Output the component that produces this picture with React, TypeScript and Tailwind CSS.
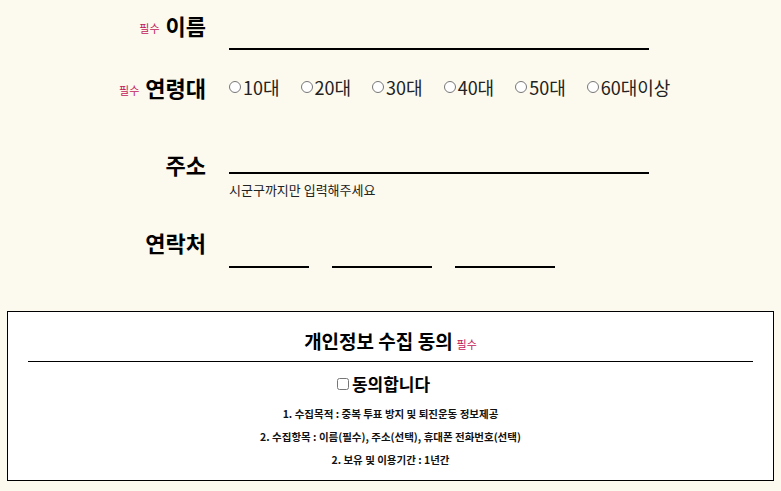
import React from "react";

const ages = ["10대", "20대", "30대", "40대", "50대", "60대이상"];

function Required({ className = "" }: { className?: string }) {
  return <span className={`text-[11px] font-normal text-[#c2185b] ${className}`}>필수</span>;
}

export default function App() {
  return (
    <div
      className="min-h-screen bg-[#fcf9ee] text-black overflow-hidden"
      style={{ fontFamily: '"Noto Sans CJK KR", "Noto Sans", sans-serif' }}
    >
      {/* 이름 */}
      <div className="flex h-[60px]">
        <div className="w-[206px] mt-[10px] h-[30px] flex items-center justify-end gap-[6px]">
          <Required className="mt-[6px]" />
          <span className="text-[22px] font-bold leading-[30px]">이름</span>
        </div>
        <input className="ml-[23px] mt-[10px] h-[40px] w-[420px] border-b-2 border-black bg-transparent outline-none" />
      </div>

      {/* 연령대 */}
      <div className="flex h-[60px]">
        <div className="w-[206px] mt-[12px] h-[30px] flex items-center justify-end gap-[6px]">
          <Required className="mt-[6px]" />
          <span className="text-[22px] font-bold leading-[30px]">연령대</span>
        </div>
        <div className="ml-[23px] mt-[12px] h-[30px] flex items-center gap-[21px]">
          {ages.map((a) => (
            <label key={a} className="flex items-center gap-[2px] text-[18px] text-[#222]">
              <input type="radio" name="age" className="m-0 w-[12px] h-[12px]" />
              {a}
            </label>
          ))}
        </div>
      </div>

      {/* 주소 */}
      <div className="flex h-[90px]">
        <div className="w-[206px] mt-[29px] h-[30px] flex items-center justify-end">
          <span className="text-[22px] font-bold leading-[30px]">주소</span>
        </div>
        <div className="ml-[23px] mt-[14px] flex flex-col">
          <input className="h-[40px] w-[420px] border-b-2 border-black bg-transparent outline-none" />
          <span className="mt-[7px] text-[13px] leading-[18px] text-[#222]">시군구까지만 입력해주세요</span>
        </div>
      </div>

      {/* 연락처 */}
      <div className="flex h-[80px]">
        <div className="w-[206px] mt-[17px] h-[30px] flex items-center justify-end">
          <span className="text-[22px] font-bold leading-[30px]">연락처</span>
        </div>
        <div className="ml-[23px] mt-[18px] flex gap-[23px]">
          <input className="h-[40px] w-[80px] border-b-2 border-black bg-transparent outline-none" />
          <input className="h-[40px] w-[100px] border-b-2 border-black bg-transparent outline-none" />
          <input className="h-[40px] w-[100px] border-b-2 border-black bg-transparent outline-none" />
        </div>
      </div>

      {/* 개인정보 수집 동의 */}
      <div className="mx-[7px] mt-[21px] h-[170px] border border-black bg-white px-[20px] pt-[15px]">
        <div className="flex items-baseline justify-center gap-[4px] h-[27px]">
          <span className="text-[19px] font-bold leading-[27px]">개인정보 수집 동의</span>
          <Required />
        </div>
        <div className="mt-[7px] h-px bg-black" />
        <label className="mt-[10px] h-[24px] flex items-center justify-center gap-[3px] pr-[14px]">
          <input type="checkbox" className="m-0 w-[12px] h-[12px]" />
          <span className="text-[17px] font-bold leading-[24px]">동의합니다</span>
        </label>
        <div className="mt-[6px] flex flex-col items-center text-[10.5px] font-bold leading-[23px] text-[#111]">
          <span>1. 수집목적 : 중복 투표 방지 및 퇴진운동 정보제공</span>
          <span>2. 수집항목 : 이름(필수), 주소(선택), 휴대폰 전화번호(선택)</span>
          <span>2. 보유 및 이용기간 : 1년간</span>
        </div>
      </div>
    </div>
  );
}
